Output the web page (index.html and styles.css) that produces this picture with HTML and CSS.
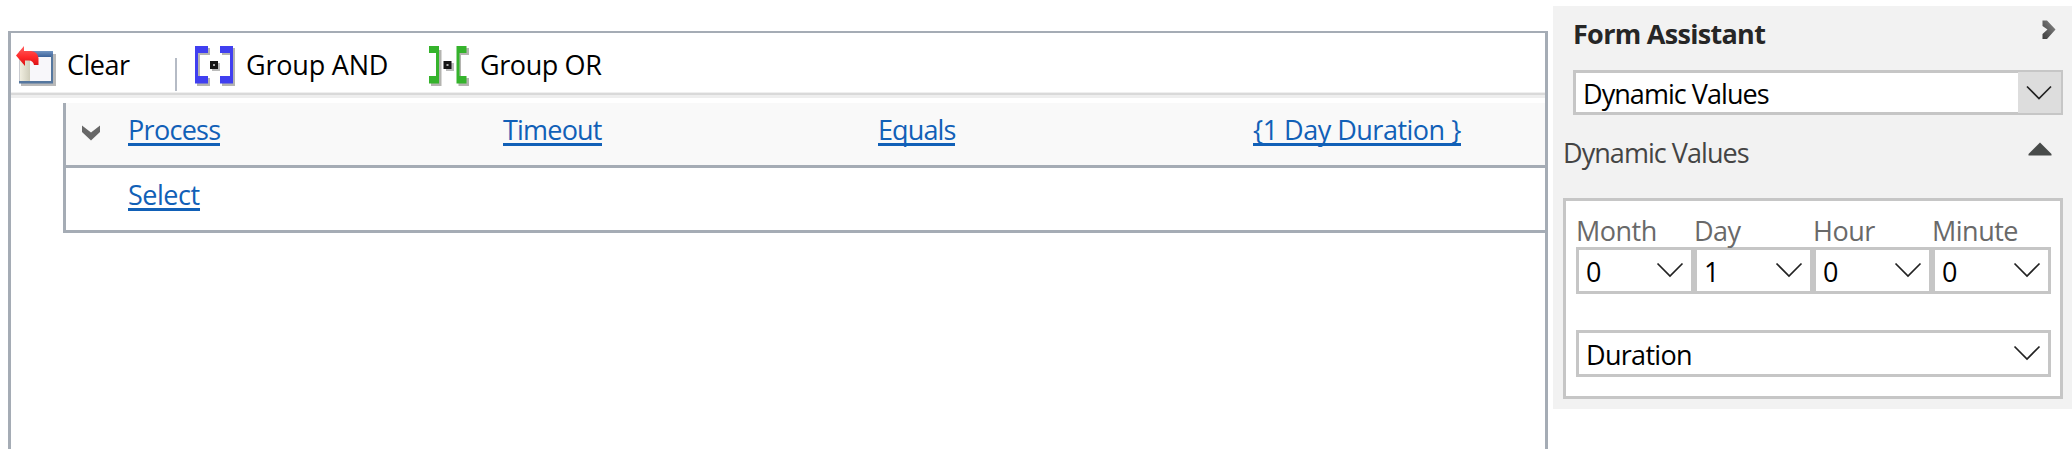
FILE: index.html
```html
<!DOCTYPE html>
<html lang="en">
<head>
<meta charset="utf-8">
<title>Form Assistant</title>
<link rel="stylesheet" href="styles.css">
</head>
<body>
<main class="page">
  <section class="editor">
    <div class="toolbar">
      <button class="tool tool-clear">
        <svg class="tool-icon" width="40" height="40" viewBox="0 0 40 40">
          <defs>
            <linearGradient id="bar" x1="0" y1="0" x2="0" y2="1"><stop offset="0" stop-color="#7295c2"/><stop offset="1" stop-color="#3b6199"/></linearGradient>
            <linearGradient id="arrow" x1="0" y1="0" x2="0" y2="1"><stop offset="0" stop-color="#ff6262"/><stop offset=".55" stop-color="#ff2a2a"/><stop offset="1" stop-color="#d80f14"/></linearGradient>
            <linearGradient id="pane" x1="0" y1="0" x2="1" y2="0"><stop offset="0" stop-color="#f0eee0"/><stop offset="1" stop-color="#cfcdbb"/></linearGradient>
          </defs>
          <path d="M5 8H40V40H5z" fill="#b9b9b9"/>
          <path d="M3 5H37V37H3z" fill="#c9cbd0"/>
          <path d="M4 5H37V11H4z" fill="url(#bar)"/>
          <path d="M4 11H14V35H4z" fill="url(#pane)"/>
          <path d="M14 11H35V35H14z" fill="#f8f7fa"/>
          <path d="M35 9H37V37H35zM3 35H37V37.500H3z" fill="#55779f"/>
          <path d="M0 9.500L8 0V5H15Q22 6 22.500 12V19H18Q17 14 12 14.500H9V20z" fill="url(#arrow)"/>
        </svg>
        <span>Clear</span>
      </button>
      <span class="separator"></span>
      <button class="tool tool-and">
        <svg class="tool-icon" width="40" height="40" viewBox="0 0 40 40">
          <path d="M2 2H15V9H5V32H15V40H2zM27 2H40V40H27V32H37V9H27z" fill="#b4b4b0"/>
          <path d="M0 0H13V7H3V30H13V37.500H0zM25 0H38V37.500H25V30H35V7H25z" fill="#403ff0"/>
          <path d="M17 17H25V25H17z" fill="#bbb"/><path d="M16.500 16.500H21.500V21.500H16.500z" fill="#aaa" stroke="#151515" stroke-width="3"/>
        </svg>
        <span>Group AND</span>
      </button>
      <button class="tool tool-or">
        <svg class="tool-icon" width="40" height="40" viewBox="0 0 40 40">
          <path d="M2 33H9V4H12.500V40H2zM29.500 2H40V9H32V32H40V40H29.500z" fill="#b4b4b0"/>
          <path d="M0 0H10V37.500H0V30H7V7H0zM27.500 0H37.500V7H30.500V30H37.500V37.500H27.500z" fill="#35b32c"/>
          <path d="M17 17H25V25H17z" fill="#bbb"/><path d="M16 16.500H21V21.500H16z" fill="#aaa" stroke="#151515" stroke-width="3"/>
        </svg>
        <span>Group OR</span>
      </button>
    </div>
    <div class="conditions">
      <div class="condition condition-filled">
        <svg class="row-arrow" width="20" height="16" viewBox="0 0 20 16"><path d="M1 .5L10 7.500L19 .5V7L10 15.500L1 7z" fill="#686868"/></svg>
        <a class="link link-process" href="#">Process</a>
        <a class="link link-timeout" href="#">Timeout</a>
        <a class="link link-equals" href="#">Equals</a>
        <a class="link link-duration" href="#">{1 Day Duration }</a>
      </div>
      <div class="condition">
        <a class="link link-select" href="#">Select</a>
      </div>
    </div>
  </section>
  <aside class="assistant">
    <header class="assistant-header">
      <h2 class="title">Form Assistant</h2>
      <svg class="expand" width="14" height="20" viewBox="0 0 14 20"><defs><linearGradient id="chev" x1="0" y1="1" x2="1" y2="0"><stop offset="0" stop-color="#3c3c3c"/><stop offset="1" stop-color="#8a8a8a"/></linearGradient></defs><path d="M.5 .5H5L13.500 9.500L5 19H.5V14L5.500 9.500L.5 6z" fill="url(#chev)"/></svg>
    </header>
    <div class="picker">
      <span class="picker-value">Dynamic Values</span>
      <span class="picker-button"><svg class="chevron" width="26" height="15" viewBox="0 0 26 15"><path d="M1 1.500L13 13.500L25 1.500"/></svg></span>
    </div>
    <div class="group-heading">
      <span class="group-title">Dynamic Values</span>
      <svg width="24" height="14" viewBox="0 0 24 14"><path d="M12 .5L23.500 12V13.500H.5V12z" fill="#484b4a"/></svg>
    </div>
    <div class="values">
      <div class="units">
        <div class="unit"><span class="unit-label">Month</span><div class="select"><span>0</span><svg class="chevron" width="28" height="16" viewBox="0 0 28 16"><path d="M1.500 1.500L14 14L26.500 1.500"/></svg></div></div>
        <div class="unit"><span class="unit-label">Day</span><div class="select"><span>1</span><svg class="chevron" width="28" height="16" viewBox="0 0 28 16"><path d="M1.500 1.500L14 14L26.500 1.500"/></svg></div></div>
        <div class="unit"><span class="unit-label">Hour</span><div class="select"><span>0</span><svg class="chevron" width="28" height="16" viewBox="0 0 28 16"><path d="M1.500 1.500L14 14L26.500 1.500"/></svg></div></div>
        <div class="unit"><span class="unit-label">Minute</span><div class="select"><span>0</span><svg class="chevron" width="28" height="16" viewBox="0 0 28 16"><path d="M1.500 1.500L14 14L26.500 1.500"/></svg></div></div>
      </div>
      <div class="select select-wide"><span>Duration</span><svg class="chevron" width="28" height="16" viewBox="0 0 28 16"><path d="M1.500 1.500L14 14L26.500 1.500"/></svg></div>
    </div>
  </aside>
</main>
</body>
</html>
```
FILE: styles.css
```css
* { box-sizing: border-box; }
body {
  margin: 0;
  background: #fff;
  color: #000;
  font: 27px/36px "Segoe UI", "Open Sans", "Noto Sans", sans-serif;
  letter-spacing: -0.7px;
  white-space: nowrap;
}
.page { display: flex; align-items: flex-start; height: 449px; overflow: hidden; padding-left: 8px; }
svg { display: block; flex: none; }

.editor {
  width: 1540px;
  height: 430px;
  margin-top: 31px;
  border: 3px solid #a5acb5;
  border-top-width: 2px;
}
.toolbar {
  display: flex;
  align-items: flex-start;
  height: 65px;
  padding: 13px 0 0 5px;
  border-bottom: 3px solid #eee;
  box-shadow: inset 0 -2px #d9d9d9, inset 0 -3px #efefef;
}
.tool {
  display: flex;
  gap: 11px;
  padding: 0;
  border: 0;
  background: none;
  color: inherit;
  font: inherit;
  letter-spacing: inherit;
}
.tool span { padding-top: 1px; }
.tool-clear { width: 159px; letter-spacing: -0.5px; }
.separator { width: 2px; height: 33px; margin: 12px 18px 0 0; background: #b5bbc5; }
.tool-and { width: 234px; letter-spacing: -0.2px; }
.tool-or { letter-spacing: -0.4px; }

.conditions { margin: 5px 0 0 52px; border-left: 3px solid #a5acb5; }
.condition {
  display: grid;
  grid-template-columns: 62px 375px 375px 375px 1fr;
  height: 65px;
  padding-top: 9px;
  border-bottom: 3px solid #a5acb5;
}
.condition-filled { background: #f9f9f9; }
.row-arrow { grid-row: 1; margin: 13px 0 0 15px; }
.link {
  grid-row: 1;
  justify-self: start;
  height: 34px;
  border-bottom: 3px solid #1160b7;
  color: #1160b7;
  text-decoration: none;
}
.link-process, .link-select { grid-column: 2; }
.link-timeout { letter-spacing: -0.8px; }
.link-equals { letter-spacing: -0.9px; }
.link-duration { letter-spacing: -0.5px; }
.link-select { letter-spacing: -0.5px; }

.assistant {
  width: 519px;
  height: 403px;
  margin: 6px 0 0 5px;
  padding: 0 9px 0 10px;
  background: #f2f2f2;
}
.assistant-header { display: flex; justify-content: space-between; height: 64px; padding: 10px 7px 0 10px; }
.title { margin: 0; color: #262626; font-size: 27px; line-height: 36px; font-weight: 700; }
.expand { margin-top: 4px; }
.picker {
  display: flex;
  justify-content: space-between;
  height: 45px;
  margin-left: 10px;
  border: 3px solid #c6c6c6;
  border-width: 2px 2px 2px 3px;
  background: #fff;
  box-shadow: inset 0 1px #c6c6c6, inset 0 -1px #c6c6c6;
}
.picker-value { padding: 4px 0 0 7px; letter-spacing: -0.95px; }
.picker-button { width: 43px; padding: 13px 8px; background: #ddd; }
.chevron path { fill: none; stroke: #222; stroke-width: 1.7; }
.group-heading { display: flex; justify-content: space-between; height: 83px; padding: 20px 11px 0 0; color: #444; }
.group-title { letter-spacing: -0.95px; }
.group-heading svg { margin-top: 7px; }
.values { height: 201px; padding: 12px 9px 0 10px; border: 3px solid #c6c6c6; background: #fff; }
.units { display: grid; grid-template-columns: 118px 119px 119px 119px; }
.unit-label { display: block; height: 34px; color: #696969; letter-spacing: -0.5px; }
.select {
  display: flex;
  justify-content: space-between;
  height: 47px;
  padding: 4px 7px 0 7px;
  border: 3px solid #c6c6c6;
}
.select .chevron { margin-top: 8px; }
.select-wide { margin-top: 36px; }
```
